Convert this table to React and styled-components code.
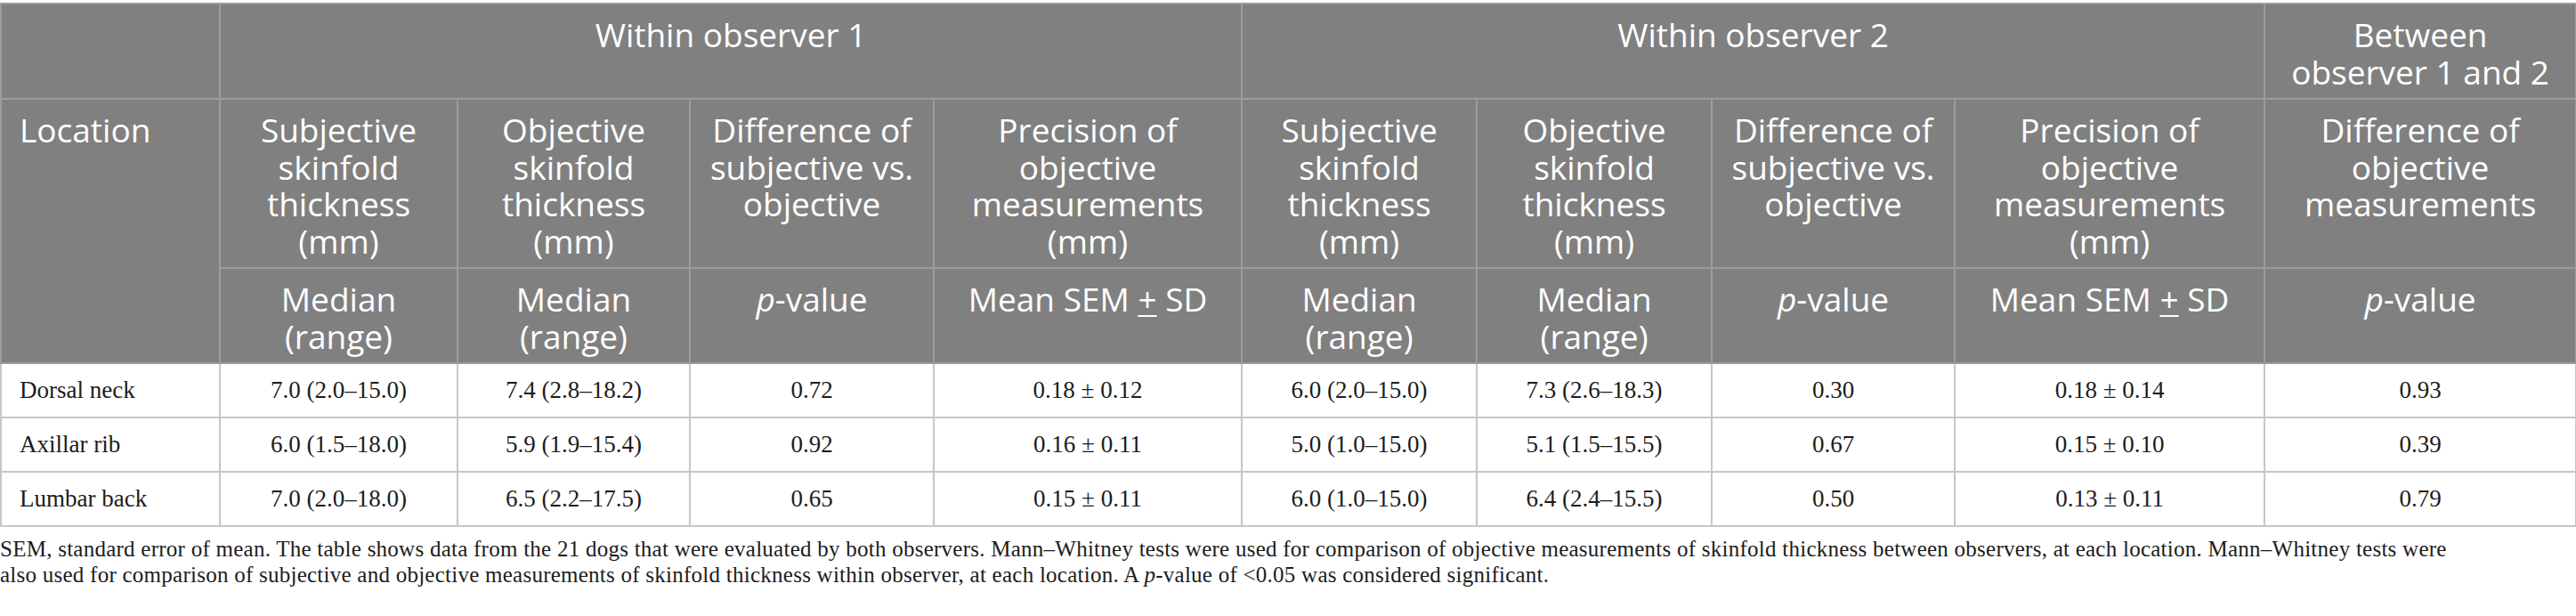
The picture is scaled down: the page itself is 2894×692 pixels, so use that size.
import React from "react";
import styled, { createGlobalStyle } from "styled-components";

const GlobalStyle = createGlobalStyle`
  body {
    margin: 0;
    background: #ffffff;
  }
`;

const Page = styled.div`
  padding-top: 3px;
  width: 2894px;
`;

const Table = styled.table`
  width: 2893px;
  table-layout: fixed;
  border-collapse: collapse;
  border-top: 2px solid #c9c9c9;
`;

const HeadCell = styled.th`
  background: #808080;
  color: #ffffff;
  font-family: "Open Sans", "Noto Sans", sans-serif;
  font-weight: 400;
  font-size: 37px;
  line-height: 41.5px;
  text-align: ${(p) => (p.$left ? "left" : "center")};
  vertical-align: top;
  padding: ${(p) => (p.$left ? "13px 16px 9px 20px" : "13px 20px 9px")};
  border: 2px solid #9c9c9c;
`;

const Cell = styled.td`
  height: 59px;
  padding: 0 20px;
  font-family: "Liberation Serif", "Times New Roman", serif;
  font-size: 27px;
  line-height: 1.2;
  color: #1c1c1c;
  text-align: ${(p) => (p.$left ? "left" : "center")};
  vertical-align: middle;
  border: 2px solid #c6c6c6;
`;

const Italic = styled.i`
  font-style: italic;
`;

const PlusMinus = styled.span`
  text-decoration: underline;
  text-underline-offset: 4px;
  text-decoration-thickness: 2px;
`;

const Footnote = styled.p`
  margin: 10px 0 0;
  max-width: 2772px;
  font-family: "Liberation Serif", "Times New Roman", serif;
  font-size: 25px;
  letter-spacing: 0.25px;
  line-height: 29px;
  color: #1c1c1c;
`;

const widths = [246, 267, 261, 274, 346, 264, 264, 273, 348, 350];

const subHeads = [
  "Subjective skinfold thickness (mm)",
  "Objective skinfold thickness (mm)",
  "Difference of subjective vs. objective",
  "Precision of objective measurements (mm)",
];

const PValue = () => (
  <>
    <Italic>p</Italic>-value
  </>
);

const MeanSem = () => (
  <>
    Mean SEM <PlusMinus>+</PlusMinus> SD
  </>
);

const rows = [
  ["Dorsal neck", "7.0 (2.0–15.0)", "7.4 (2.8–18.2)", "0.72", "0.18 ± 0.12", "6.0 (2.0–15.0)", "7.3 (2.6–18.3)", "0.30", "0.18 ± 0.14", "0.93"],
  ["Axillar rib", "6.0 (1.5–18.0)", "5.9 (1.9–15.4)", "0.92", "0.16 ± 0.11", "5.0 (1.0–15.0)", "5.1 (1.5–15.5)", "0.67", "0.15 ± 0.10", "0.39"],
  ["Lumbar back", "7.0 (2.0–18.0)", "6.5 (2.2–17.5)", "0.65", "0.15 ± 0.11", "6.0 (1.0–15.0)", "6.4 (2.4–15.5)", "0.50", "0.13 ± 0.11", "0.79"],
];

export default function App() {
  return (
    <Page>
      <GlobalStyle />
      <Table>
        <colgroup>
          {widths.map((w, i) => (
            <col key={i} style={{ width: w }} />
          ))}
        </colgroup>
        <thead>
          <tr>
            <HeadCell />
            <HeadCell colSpan={4}>Within observer 1</HeadCell>
            <HeadCell colSpan={4}>Within observer 2</HeadCell>
            <HeadCell>Between observer 1 and 2</HeadCell>
          </tr>
          <tr>
            <HeadCell rowSpan={2} $left>
              Location
            </HeadCell>
            {subHeads.map((h) => (
              <HeadCell key={"a" + h}>{h}</HeadCell>
            ))}
            {subHeads.map((h) => (
              <HeadCell key={"b" + h}>{h}</HeadCell>
            ))}
            <HeadCell>Difference of objective measurements</HeadCell>
          </tr>
          <tr>
            <HeadCell>Median (range)</HeadCell>
            <HeadCell>Median (range)</HeadCell>
            <HeadCell>
              <PValue />
            </HeadCell>
            <HeadCell>
              <MeanSem />
            </HeadCell>
            <HeadCell>Median (range)</HeadCell>
            <HeadCell>Median (range)</HeadCell>
            <HeadCell>
              <PValue />
            </HeadCell>
            <HeadCell>
              <MeanSem />
            </HeadCell>
            <HeadCell>
              <PValue />
            </HeadCell>
          </tr>
        </thead>
        <tbody>
          {rows.map((r) => (
            <tr key={r[0]}>
              {r.map((v, i) => (
                <Cell key={i} $left={i === 0}>
                  {v}
                </Cell>
              ))}
            </tr>
          ))}
        </tbody>
      </Table>
      <Footnote>
        SEM, standard error of mean. The table shows data from the 21 dogs that were evaluated by both
        observers. Mann–Whitney tests were used for comparison of objective measurements of skinfold
        thickness between observers, at each location. Mann–Whitney tests were also used for comparison
        of subjective and objective measurements of skinfold thickness within observer, at each location.
        A <Italic>p</Italic>-value of &lt;0.05 was considered significant.
      </Footnote>
    </Page>
  );
}
